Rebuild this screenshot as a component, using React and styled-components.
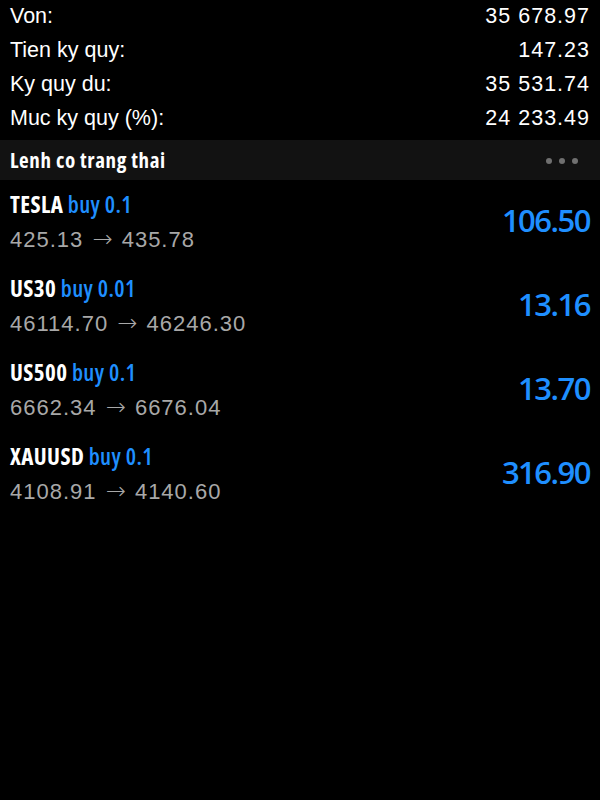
import React from 'react'
import styled, { createGlobalStyle } from 'styled-components'

const GlobalStyle = createGlobalStyle`
	body {
		margin: 0;
		background: #000;
		font-family: "Liberation Sans", Arial, sans-serif;
	}
`

const Page = styled.div`
	width: 600px;
	min-height: 800px;
	background: #000;
	color: #fff;
`

const Summary = styled.div`
	padding: 0 10px;
`

const SummaryRow = styled.div`
	display: flex;
	justify-content: space-between;
	align-items: center;
	height: 34px;
	font-size: 21.5px;
	&:first-child {
		margin-top: -1px;
	}
`

const Value = styled.span`
	letter-spacing: 1px;
`

const SectionHeader = styled.div`
	margin-top: 5px;
	height: 40px;
	background: #121212;
	display: flex;
	justify-content: space-between;
	align-items: center;
	padding: 0 22px 0 10px;
`

const SectionTitle = styled.span`
	font-family: "Open Sans", sans-serif;
	font-stretch: 75%;
	font-weight: 700;
	font-size: 21px;
	letter-spacing: 0.6px;
`

const Dots = styled.div`
	display: flex;
	gap: 7px;
	padding-top: 1px;
`

const Dot = styled.span`
	width: 6px;
	height: 6px;
	border-radius: 50%;
	background: #707070;
`

const Order = styled.div`
	height: 84px;
	display: flex;
	justify-content: space-between;
	align-items: center;
	padding: 0 10px;
`

const OrderInfo = styled.div`
	display: flex;
	flex-direction: column;
	padding-top: 4px;
`

const Title = styled.div`
	font-family: "Open Sans", sans-serif;
	font-stretch: 75%;
	font-weight: 700;
	font-size: 23px;
	letter-spacing: 0.4px;
	line-height: 30px;
	color: #fff;
`

const Side = styled.span`
	color: #1f8fff;
	font-weight: 600;
`

const Prices = styled.div`
	font-size: 22px;
	line-height: 40px;
	letter-spacing: 1px;
	color: #a8a8a8;
`

const Arrow = styled.span`
	font-family: "DejaVu Sans", sans-serif;
	font-weight: 300;
	font-size: 24px;
	letter-spacing: 0;
	margin: 0 2px;
`

const Profit = styled.div`
	font-family: "Open Sans", sans-serif;
	font-weight: 600;
	font-size: 31px;
	letter-spacing: -1.5px;
	color: #1f8fff;
	margin-top: -4px;
`

const summary = [
	['Von:', '35 678.97'],
	['Tien ky quy:', '147.23'],
	['Ky quy du:', '35 531.74'],
	['Muc ky quy (%):', '24 233.49'],
]

const orders = [
	{ symbol: 'TESLA', side: 'buy 0.1', from: '425.13', to: '435.78', profit: '106.50' },
	{ symbol: 'US30', side: 'buy 0.01', from: '46114.70', to: '46246.30', profit: '13.16' },
	{ symbol: 'US500', side: 'buy 0.1', from: '6662.34', to: '6676.04', profit: '13.70' },
	{ symbol: 'XAUUSD', side: 'buy 0.1', from: '4108.91', to: '4140.60', profit: '316.90' },
]

const App = () => {
	return (
		<Page>
			<GlobalStyle />
			<Summary>
				{summary.map(([label, value]) => (
					<SummaryRow key={label}>
						<span>{label}</span>
						<Value>{value}</Value>
					</SummaryRow>
				))}
			</Summary>
			<SectionHeader>
				<SectionTitle>Lenh co trang thai</SectionTitle>
				<Dots>
					<Dot />
					<Dot />
					<Dot />
				</Dots>
			</SectionHeader>
			{orders.map((o) => (
				<Order key={o.symbol}>
					<OrderInfo>
						<Title>
							{o.symbol} <Side>{o.side}</Side>
						</Title>
						<Prices>
							{o.from} <Arrow>→</Arrow> {o.to}
						</Prices>
					</OrderInfo>
					<Profit>{o.profit}</Profit>
				</Order>
			))}
		</Page>
	)
}

export default App
